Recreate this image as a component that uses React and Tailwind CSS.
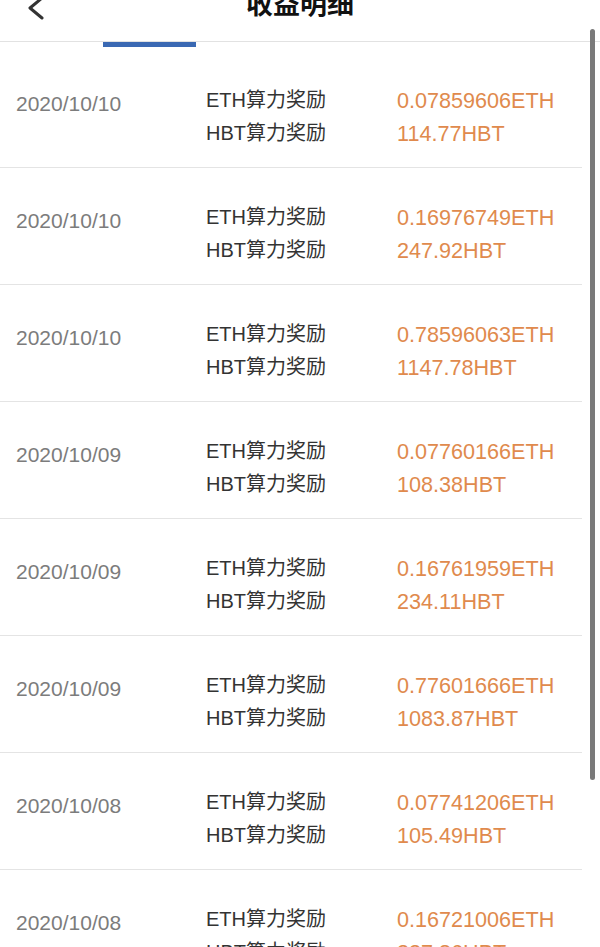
const records = [
  { date: "2020/10/10", eth: "0.07859606ETH", hbt: "114.77HBT" },
  { date: "2020/10/10", eth: "0.16976749ETH", hbt: "247.92HBT" },
  { date: "2020/10/10", eth: "0.78596063ETH", hbt: "1147.78HBT" },
  { date: "2020/10/09", eth: "0.07760166ETH", hbt: "108.38HBT" },
  { date: "2020/10/09", eth: "0.16761959ETH", hbt: "234.11HBT" },
  { date: "2020/10/09", eth: "0.77601666ETH", hbt: "1083.87HBT" },
  { date: "2020/10/08", eth: "0.07741206ETH", hbt: "105.49HBT" },
  { date: "2020/10/08", eth: "0.16721006ETH", hbt: "227.86HBT" },
];

export default function App() {
  return (
    <div
      className="relative w-full h-[947px] overflow-hidden bg-white"
      style={{ fontFamily: '"Liberation Sans", "Noto Sans CJK SC", sans-serif' }}
    >
      {/* nav bar */}
      <div className="relative h-[42px] border-b border-[#e2e2e2] flex justify-center">
        <svg
          className="absolute left-[24px] top-[-6px]"
          width="24"
          height="28"
          viewBox="0 0 24 28"
          fill="none"
          stroke="#333"
          strokeWidth="3"
          strokeLinecap="round"
          strokeLinejoin="round"
        >
          <polyline points="18,4 6,14 18,24" />
        </svg>
        <h1 className="-mt-[8px] text-[27px] leading-[27px] font-semibold text-[#111]">
          收益明细
        </h1>
      </div>

      {/* tab indicator */}
      <div className="h-[9px]">
        <div className="ml-[103px] w-[93px] h-[5px] bg-[#3a69b3]" />
      </div>

      {/* list */}
      <div className="mr-[18px]">
        {records.map((r, i) => (
          <div
            key={i}
            className="h-[117px] border-b border-[#e4e4e4] flex items-start pt-[33px] pl-[16px]"
          >
            <div className="w-[190px] mt-[3px] text-[21px] leading-[33px] text-[#7c7c7c]">
              {r.date}
            </div>
            <div className="w-[191px] text-[20px] leading-[33px] text-[#333]">
              <div>ETH算力奖励</div>
              <div>HBT算力奖励</div>
            </div>
            <div className="text-[21.6px] leading-[33px] text-[#e08a4d]">
              <div>{r.eth}</div>
              <div>{r.hbt}</div>
            </div>
          </div>
        ))}
      </div>

      {/* scroll indicator */}
      <div className="absolute right-[5px] top-[29px] w-[5px] h-[751px] rounded-full bg-[#7a7a7a]" />
    </div>
  );
}
